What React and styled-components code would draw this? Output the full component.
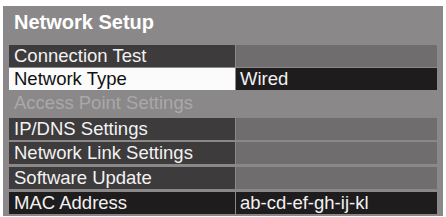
import React from 'react';
import styled, { createGlobalStyle } from 'styled-components';

const GlobalStyle = createGlobalStyle`
  html, body {
    margin: 0;
    padding: 0;
    background: #ffffff;
  }
  body {
    font-family: "Liberation Sans", Arial, sans-serif;
  }
`;

const rows = [
  { label: 'Connection Test', value: '', kind: 'normal', gap: 0 },
  { label: 'Network Type', value: 'Wired', kind: 'selected', gap: 1 },
  { label: 'Access Point Settings', value: '', kind: 'disabled', gap: 2 },
  { label: 'IP/DNS Settings', value: '', kind: 'normal', gap: 4 },
  { label: 'Network Link Settings', value: '', kind: 'normal', gap: 2 },
  { label: 'Software Update', value: '', kind: 'normal', gap: 3 },
  { label: 'MAC Address', value: 'ab-cd-ef-gh-ij-kl', kind: 'info', gap: 3 },
];

const labelBg = {
  normal: '#3d3b3c',
  selected: '#fbfbfb',
  disabled: '#8a8889',
  info: '#1f1c1d',
};

const labelColor = {
  normal: '#f2f2f2',
  selected: '#111111',
  disabled: '#aaa8a9',
  info: '#f2f2f2',
};

const valueBg = {
  normal: '#6f6d6e',
  selected: '#1f1c1d',
  disabled: '#8a8889',
  info: '#1f1c1d',
};

const NetworkSetup = () => {
  return (
    <Panel>
      <Title>Network Setup</Title>
      <List>
        {rows.map((r) => (
          <Row key={r.label} $gap={r.gap}>
            <Label $kind={r.kind}>{r.label}</Label>
            <Value $kind={r.kind}>{r.value}</Value>
          </Row>
        ))}
      </List>
    </Panel>
  );
};

export default function App() {
  return (
    <>
      <GlobalStyle />
      <NetworkSetup />
    </>
  );
}

const Panel = styled.div`
  margin: 6px 3px 0 3px;
  width: 440px;
  box-sizing: border-box;
  background: #8a8889;
  padding: 0 6px 2px 6px;
`;

const Title = styled.div`
  height: 39px;
  padding-left: 5px;
  color: #ffffff;
  font-size: 20px;
  font-weight: bold;
  line-height: 32px;
`;

const List = styled.div`
  display: flex;
  flex-direction: column;
`;

const Row = styled.div`
  display: grid;
  grid-template-columns: 226px 1fr;
  column-gap: 1px;
  height: 22px;
  margin-top: ${(p) => p.$gap}px;
`;

const Label = styled.div`
  background: ${(p) => labelBg[p.$kind]};
  color: ${(p) => labelColor[p.$kind]};
  font-size: 18.5px;
  line-height: 22px;
  padding-left: 5px;
  white-space: nowrap;
`;

const Value = styled.div`
  background: ${(p) => valueBg[p.$kind]};
  color: #f2f2f2;
  font-size: 18.5px;
  line-height: 22px;
  padding-left: 4px;
  white-space: nowrap;
`;
